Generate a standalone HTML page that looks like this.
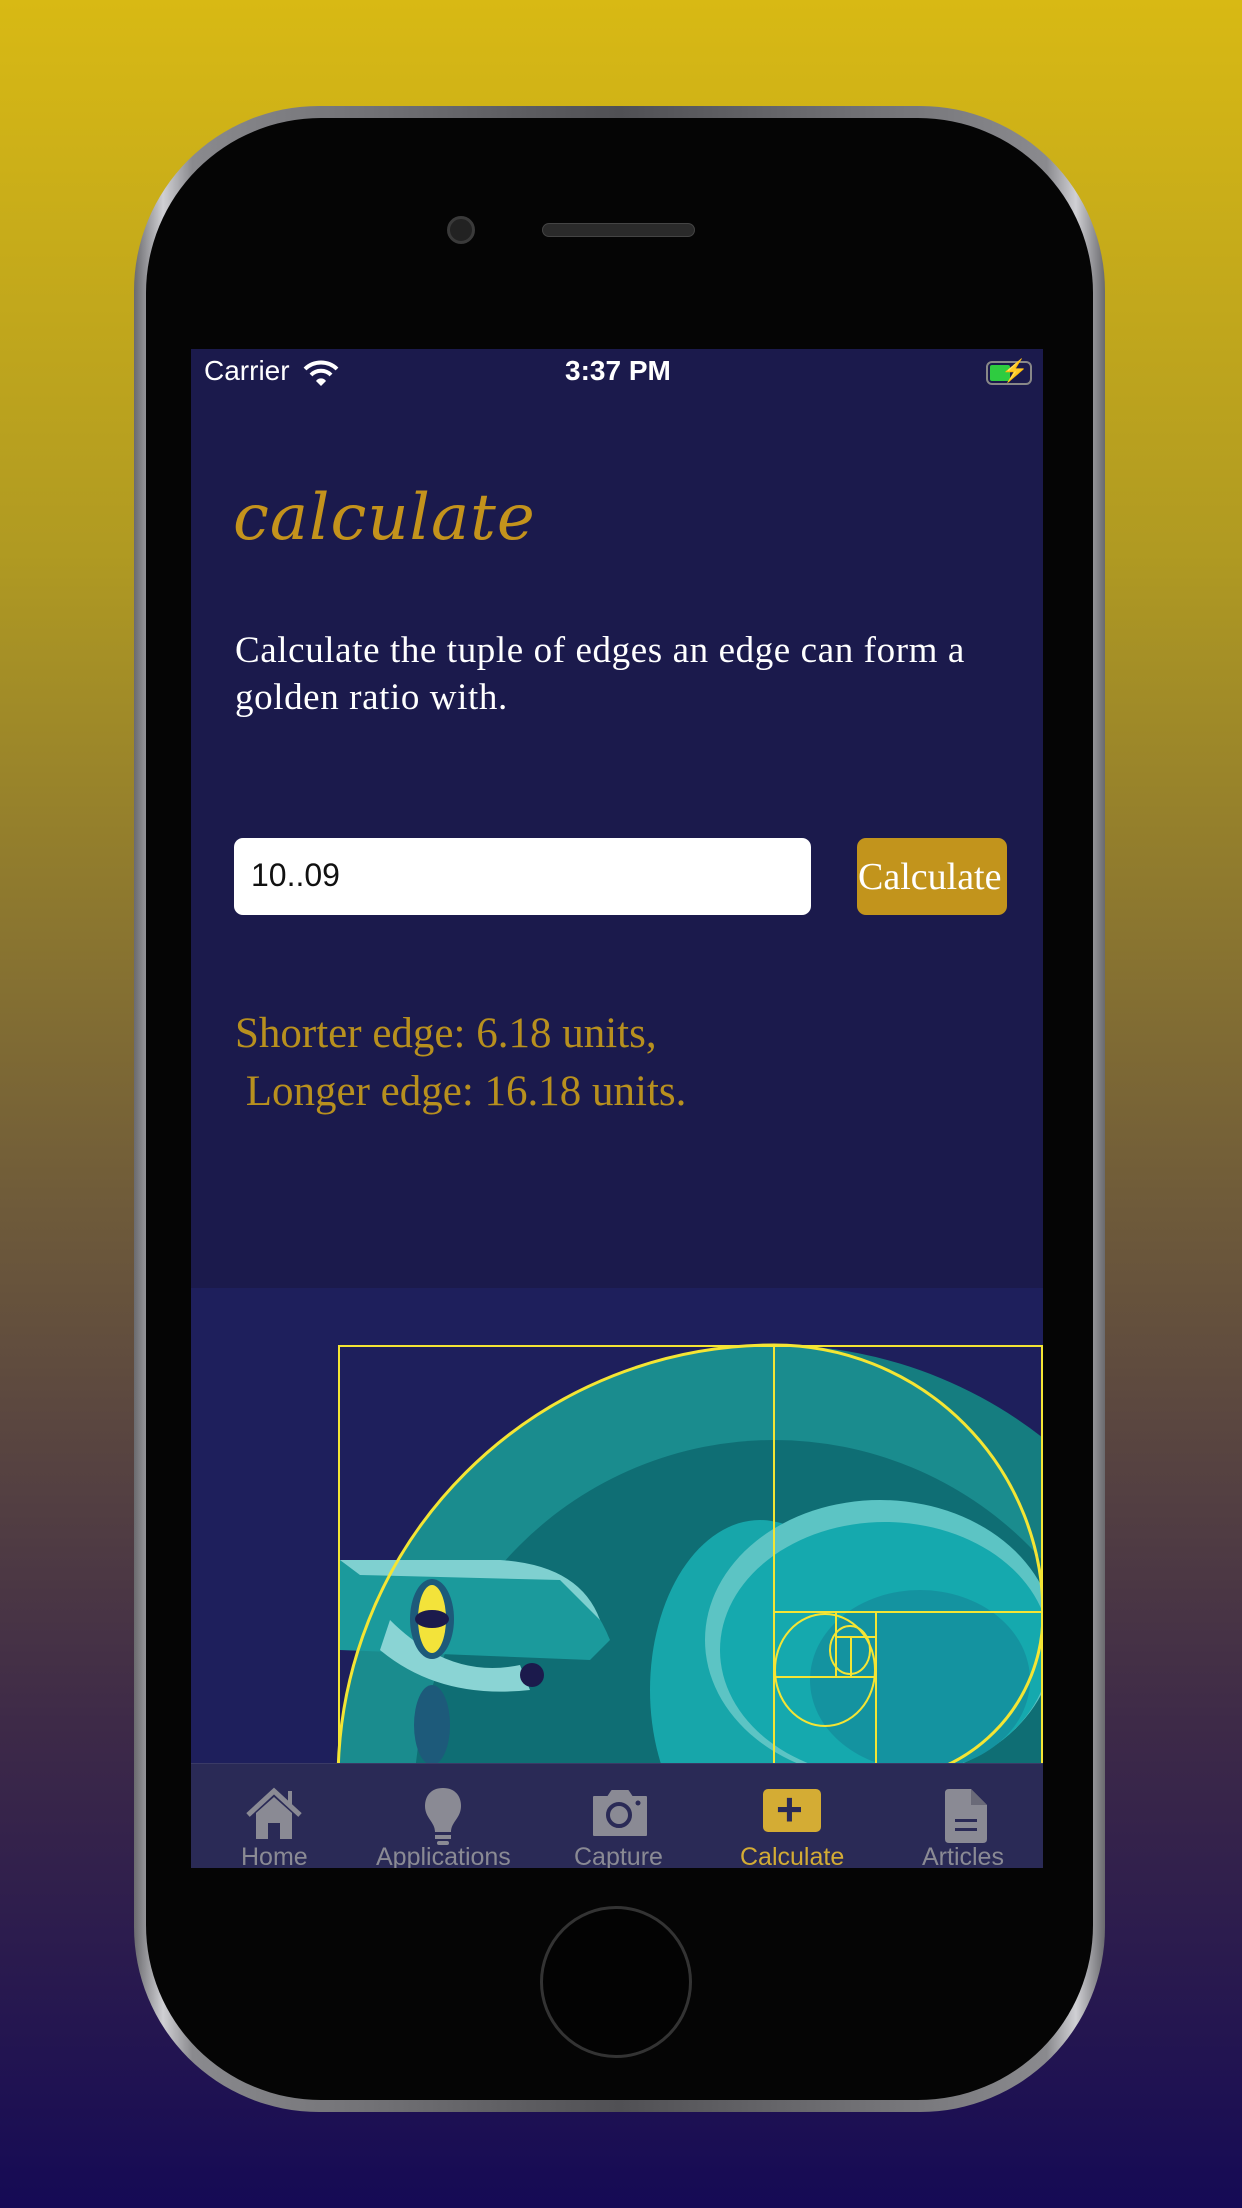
<!DOCTYPE html>
<html><head><meta charset="utf-8"><style>
*{margin:0;padding:0;box-sizing:border-box}
body{width:1242px;height:2208px;overflow:hidden;position:relative;background:linear-gradient(#d8b914 0%,#b09a22 25%,#6e5a3a 55%,#3e2a48 78%,#150a55 100%);font-family:"Liberation Sans",sans-serif}
.abs{position:absolute}
.phone{left:134px;top:106px;width:971px;height:2006px;border-radius:185px;background:linear-gradient(90deg,#6a6a6e,#d0d0d4 3%,#8a8a8e 6%,#505054 50%,#8a8a8e 94%,#d0d0d4 97%,#6a6a6e)}
.inner{left:146px;top:118px;width:947px;height:1982px;border-radius:175px;background:#050505}
.screen{left:191px;top:349px;width:852px;height:1519px;background:#1b1a4c;overflow:hidden}
.txt{position:absolute;white-space:nowrap}
</style></head><body>
<div class="abs phone"></div>
<div class="abs inner"></div>
<div class="abs" style="left:447px;top:216px;width:28px;height:28px;border-radius:50%;background:#222;border:3px solid #3a3a3a"></div>
<div class="abs" style="left:542px;top:223px;width:153px;height:14px;border-radius:7px;background:#2a2a2a;border:1px solid #444"></div>
<div class="abs" style="left:540px;top:1906px;width:152px;height:152px;border-radius:50%;border:3px solid #333;background:#030303"></div>
<div class="abs screen">
  <div class="txt" style="left:13px;top:6px;color:#fff;font-size:28px">Carrier</div>
  <svg class="abs" style="left:112px;top:10px" width="36" height="28" viewBox="0 0 36 28"><path d="M2 10a23 23 0 0 1 32 0" stroke="#fff" stroke-width="4" fill="none"/><path d="M8 16a14 14 0 0 1 20 0" stroke="#fff" stroke-width="4" fill="none"/><path d="M13 22a6 6 0 0 1 10 0L18 27z" fill="#fff"/></svg>
  <div class="txt" style="left:374px;top:6px;color:#fff;font-size:28px;font-weight:bold">3:37 PM</div>
  <div class="abs" style="left:795px;top:12px;width:46px;height:24px;border:2px solid #888;border-radius:6px"></div>
  <div class="abs" style="left:799px;top:16px;width:20px;height:16px;background:#2ecc40;border-radius:2px"></div>
  <div class="txt" style="left:810px;top:9px;color:#fff;font-size:22px">⚡</div>
  <div class="txt" style="left:42px;top:132px;color:#c4931c;font-size:64px;font-family:'DejaVu Serif',serif;font-style:italic;letter-spacing:1px">calculate</div>
  <div class="txt" style="left:44px;top:278px;color:#fff;font-size:37px;line-height:47px;letter-spacing:0.6px;font-family:'Liberation Serif',serif">Calculate the tuple of edges an edge can form a<br>golden ratio with.</div>
  <div class="abs" style="left:43px;top:489px;width:577px;height:77px;background:#fff;border-radius:9px"></div>
  <div class="txt" style="left:60px;top:508px;color:#111;font-size:32px">10..09</div>
  <div class="abs" style="left:666px;top:489px;width:150px;height:77px;background:#c2941c;border-radius:9px"></div>
  <div class="txt" style="left:667px;top:506px;color:#fff;font-size:38px;font-family:'Liberation Serif',serif">Calculate</div>
  <div class="txt" style="left:44px;top:656px;color:#b8901e;font-size:43px;line-height:58px;font-family:'Liberation Serif',serif">Shorter edge: 6.18 units,<br>&nbsp;Longer edge: 16.18 units.</div>
  <div class="abs" style="left:0;top:939px;width:852px;height:480px;background:#1e1f5c"></div>
  <svg class="abs" style="left:0;top:939px" width="852" height="480" viewBox="191 1288 852 480">
    <defs><clipPath id="c"><rect x="338" y="1345" width="705" height="436"/></clipPath></defs>
    <g clip-path="url(#c)">
      <circle cx="774" cy="1781" r="436" fill="#157d80"/>
      <path d="M338 1781A436 436 0 0 1 774 1345A269 269 0 0 1 1043 1614L1043 1781Z" fill="#1a8c8e"/>
      <circle cx="774" cy="1800" r="360" fill="#0f6e74"/>
      <ellipse cx="760" cy="1690" rx="110" ry="170" fill="#17a6aa"/>
      <ellipse cx="880" cy="1640" rx="175" ry="140" fill="#5cc4c4"/>
      <ellipse cx="885" cy="1650" rx="165" ry="128" fill="#15a9ae"/>
      <ellipse cx="920" cy="1680" rx="110" ry="90" fill="#1493a0"/>
      <path d="M340 1560L500 1560Q580 1565 610 1640L590 1660L340 1650Z" fill="#1b9a9c"/>
      <path d="M340 1560L500 1560Q580 1565 600 1620L560 1580L360 1575Z" fill="#7fd0d0"/>
      <path d="M390 1620Q450 1680 520 1665L530 1690Q440 1700 380 1650Z" fill="#8ad4d4"/>
      <ellipse cx="432" cy="1619" rx="22" ry="40" fill="#1d5a7a"/>
      <ellipse cx="432" cy="1619" rx="14" ry="34" fill="#f3e33a"/>
      <ellipse cx="432" cy="1619" rx="17" ry="9" fill="#1b1a4c"/>
      <ellipse cx="432" cy="1725" rx="18" ry="40" fill="#1d5a7a"/>
      <circle cx="532" cy="1675" r="12" fill="#1b1a4c"/>
    </g>
    <g fill="none" stroke="#f4e534" stroke-width="2">
      <rect x="339" y="1346" width="703" height="436"/>
      <line x1="774" y1="1345" x2="774" y2="1781"/>
      <line x1="774" y1="1612" x2="1043" y2="1612"/>
      <line x1="876" y1="1612" x2="876" y2="1781"/>
      <line x1="774" y1="1677" x2="876" y2="1677"/>
      <line x1="836" y1="1612" x2="836" y2="1677"/>
      <line x1="836" y1="1637" x2="876" y2="1637"/>
      <line x1="851" y1="1637" x2="851" y2="1677"/>
      <path d="M338 1781A436 436 0 0 1 774 1345A269 269 0 0 1 1043 1614A167 167 0 0 1 876 1781" stroke-width="3"/>
      <ellipse cx="825" cy="1670" rx="50" ry="56"/>
      <ellipse cx="850" cy="1650" rx="20" ry="24"/>
    </g>
  </svg>
  <div class="abs" style="left:0;top:1414px;width:852px;height:105px;background:#2a2a56;border-top:1px solid #3a3a66"></div>
  <svg class="abs" style="left:53px;top:1438px" width="60" height="54" viewBox="0 0 60 54"><path d="M4 28L30 4L56 28" stroke="#8a8a94" stroke-width="5" fill="none"/><path d="M12 26L30 10L48 26V52H36V36H24V52H12Z" fill="#8a8a94"/><rect x="44" y="4" width="4" height="16" fill="#8a8a94"/></svg>
  <svg class="abs" style="left:232px;top:1437px" width="40" height="64" viewBox="0 0 40 64"><path d="M20 2C8 2 2 10 2 20C2 32 12 36 12 46H28C28 36 38 32 38 20C38 10 32 2 20 2Z" fill="#8a8a94"/><rect x="12" y="49" width="16" height="4" fill="#8a8a94"/><rect x="14" y="55" width="12" height="4" rx="2" fill="#8a8a94"/></svg>
  <svg class="abs" style="left:399px;top:1440px" width="60" height="48" viewBox="0 0 60 48"><path d="M4 8H18L22 2H38L42 8H56V46H4Z" fill="#8a8a94" stroke="#8a8a94" stroke-width="2" stroke-linejoin="round"/><circle cx="29" cy="26" r="11" fill="none" stroke="#2a2a56" stroke-width="4"/><circle cx="48" cy="14" r="2.5" fill="#2a2a56"/></svg>
  <div class="abs" style="left:572px;top:1440px;width:58px;height:43px;border-radius:5px;background:#d4ac34"></div>
  <div class="txt" style="left:585px;top:1433px;color:#2a2a56;font-size:46px;font-weight:bold">+</div>
  <svg class="abs" style="left:754px;top:1440px" width="42" height="54" viewBox="0 0 42 54"><path d="M4 0H26L42 16V50Q42 54 38 54H4Q0 54 0 50V4Q0 0 4 0Z" fill="#8a8a94"/><path d="M26 0V16H42" fill="#6a6a78"/><rect x="10" y="30" width="22" height="3" fill="#2a2a56"/><rect x="10" y="39" width="22" height="3" fill="#2a2a56"/></svg>
  <div class="txt" style="left:50px;top:1494px;color:#8a8a94;font-size:25px">Home</div>
  <div class="txt" style="left:185px;top:1494px;color:#8a8a94;font-size:25px">Applications</div>
  <div class="txt" style="left:383px;top:1494px;color:#8a8a94;font-size:25px">Capture</div>
  <div class="txt" style="left:549px;top:1494px;color:#d4ac34;font-size:25px">Calculate</div>
  <div class="txt" style="left:731px;top:1494px;color:#8a8a94;font-size:25px">Articles</div>
</div>
</body></html>
